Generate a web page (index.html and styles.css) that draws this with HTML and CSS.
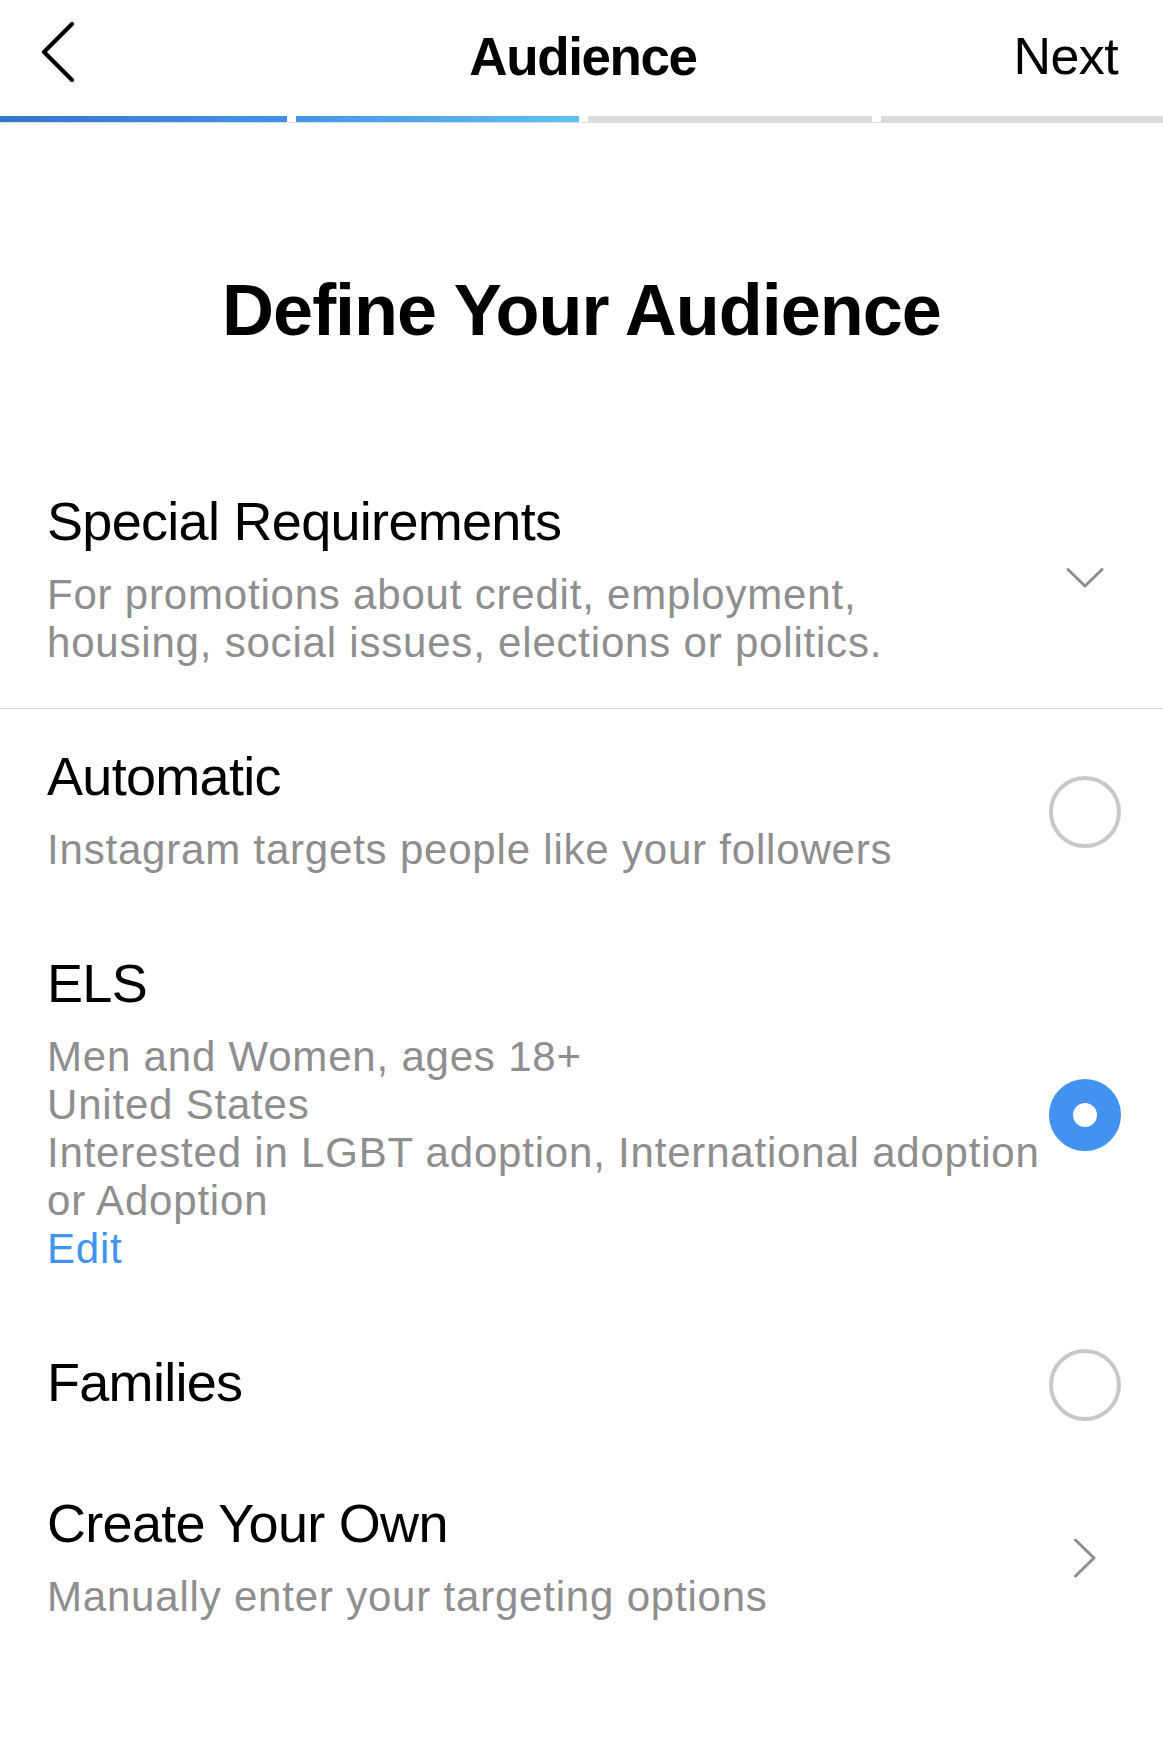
FILE: index.html
```html
<!DOCTYPE html>
<html lang="en">
<head>
<meta charset="utf-8">
<title>Audience</title>
<link rel="stylesheet" href="styles.css">
</head>
<body>
<header class="topbar">
  <div class="nav">
    <div class="nav-back">
      <svg class="back-icon" width="36" height="62" viewBox="0 0 36 62" aria-hidden="true">
        <path d="M32 4 L4 32 L32 60" fill="none" stroke="#000" stroke-width="4.2" stroke-linecap="round" stroke-linejoin="round"/>
      </svg>
    </div>
    <div class="nav-title">Audience</div>
    <div class="nav-next">Next</div>
  </div>
  <div class="progress">
    <span class="seg seg-done-1"></span>
    <span class="seg seg-done-2"></span>
    <span class="seg"></span>
    <span class="seg"></span>
  </div>
</header>

<main>
  <h1 class="page-title">Define Your Audience</h1>

  <section class="special-row">
    <div class="opt-text">
      <div class="opt-title">Special Requirements</div>
      <div class="opt-desc special-desc">For promotions about credit, employment, housing, social issues, elections or politics.</div>
    </div>
    <div class="control">
      <svg width="38" height="22" viewBox="0 0 38 22" aria-hidden="true">
        <path d="M2 2.5 L19 19 L36 2.5" fill="none" stroke="#8e8e8e" stroke-width="3" stroke-linecap="round" stroke-linejoin="round"/>
      </svg>
    </div>
  </section>

  <ul class="options">
    <li class="option">
      <div class="opt-text">
        <div class="opt-title">Automatic</div>
        <div class="opt-desc">Instagram targets people like your followers</div>
      </div>
      <div class="control"><span class="radio"></span></div>
    </li>
    <li class="option">
      <div class="opt-text">
        <div class="opt-title">ELS</div>
        <div class="opt-desc">Men and Women, ages 18+<br>United States<br>Interested in LGBT adoption, International adoption or Adoption</div>
        <div class="opt-desc edit-link">Edit</div>
      </div>
      <div class="control"><span class="radio is-on"></span></div>
    </li>
    <li class="option">
      <div class="opt-text">
        <div class="opt-title opt-title-only">Families</div>
      </div>
      <div class="control"><span class="radio"></span></div>
    </li>
    <li class="option">
      <div class="opt-text">
        <div class="opt-title">Create Your Own</div>
        <div class="opt-desc">Manually enter your targeting options</div>
      </div>
      <div class="control">
        <svg class="chev-right" width="24" height="40" viewBox="0 0 24 40" aria-hidden="true">
          <path d="M2.5 2 L21 20 L2.5 38" fill="none" stroke="#8e8e8e" stroke-width="3" stroke-linecap="round" stroke-linejoin="round"/>
        </svg>
      </div>
    </li>
  </ul>
</main>
</body>
</html>
```

FILE: styles.css
```css
* {
  box-sizing: border-box;
}

html, body {
  margin: 0;
  padding: 0;
  background: #fff;
}

body {
  font-family: "Liberation Sans", Arial, sans-serif;
  color: #000;
  width: 1163px;
  min-height: 1742px;
}

/* ---------- Top bar ---------- */
.topbar {
  border-bottom: 1px solid #dcdcdc;
}

.nav {
  display: grid;
  grid-template-columns: 1fr auto 1fr;
  align-items: start;
  height: 116px;
  padding: 0 45px 0 40px;
}

.nav-back {
  justify-self: start;
  margin-top: 20px;
}

.back-icon {
  display: block;
}

.nav-title {
  margin-top: 30px;
  font-size: 53px;
  line-height: 53px;
  font-weight: 700;
  letter-spacing: -1.4px;
  padding-left: 8px;
}

.nav-next {
  justify-self: end;
  margin-top: 30px;
  font-size: 52px;
  line-height: 52px;
  letter-spacing: -0.6px;
}

.progress {
  display: grid;
  grid-template-columns: 287px 283px 284px 1fr;
  gap: 9px;
  height: 6px;
}

.seg {
  background: #dbdbdb;
}

.seg-done-1 {
  background: linear-gradient(90deg, #3675cc 0%, #4292ea 100%);
}

.seg-done-2 {
  background: linear-gradient(90deg, #4596eb 0%, #5dc0f1 100%);
}

/* ---------- Main ---------- */
.page-title {
  margin: 0;
  padding-top: 151px;
  text-align: center;
  font-size: 72px;
  line-height: 72px;
  font-weight: 700;
  letter-spacing: -1px;
}

.special-row {
  display: flex;
  align-items: center;
  padding: 143px 42px 41px 47px;
  border-bottom: 1px solid #dbdbdb;
}

.opt-text {
  flex: 1;
  min-width: 0;
}

.opt-title {
  font-size: 54px;
  line-height: 64px;
  letter-spacing: -0.7px;
  color: #000;
  margin-bottom: 18px;
}

.opt-title-only {
  margin-bottom: 0;
}

.opt-desc {
  font-size: 42px;
  line-height: 48px;
  letter-spacing: 0.8px;
  color: #8e8e8e;
}

.special-desc {
  max-width: 900px;
}

.edit-link {
  color: #3f94ef;
}

.options {
  list-style: none;
  margin: 0;
  padding: 35px 42px 0 47px;
  display: flex;
  flex-direction: column;
  gap: 77px;
}

.option {
  display: flex;
  align-items: center;
}

.control {
  flex: none;
  width: 72px;
  display: flex;
  align-items: center;
  justify-content: center;
}

.control svg {
  display: block;
}

.control .chev-right {
  margin-top: 4px;
}

.radio {
  display: block;
  width: 72px;
  height: 72px;
  border-radius: 50%;
  border: 4px solid #c8c8c8;
  background: #fff;
  margin: -1px 0 -7px;
}

.radio.is-on {
  border: 24px solid #4193ef;
}
```
